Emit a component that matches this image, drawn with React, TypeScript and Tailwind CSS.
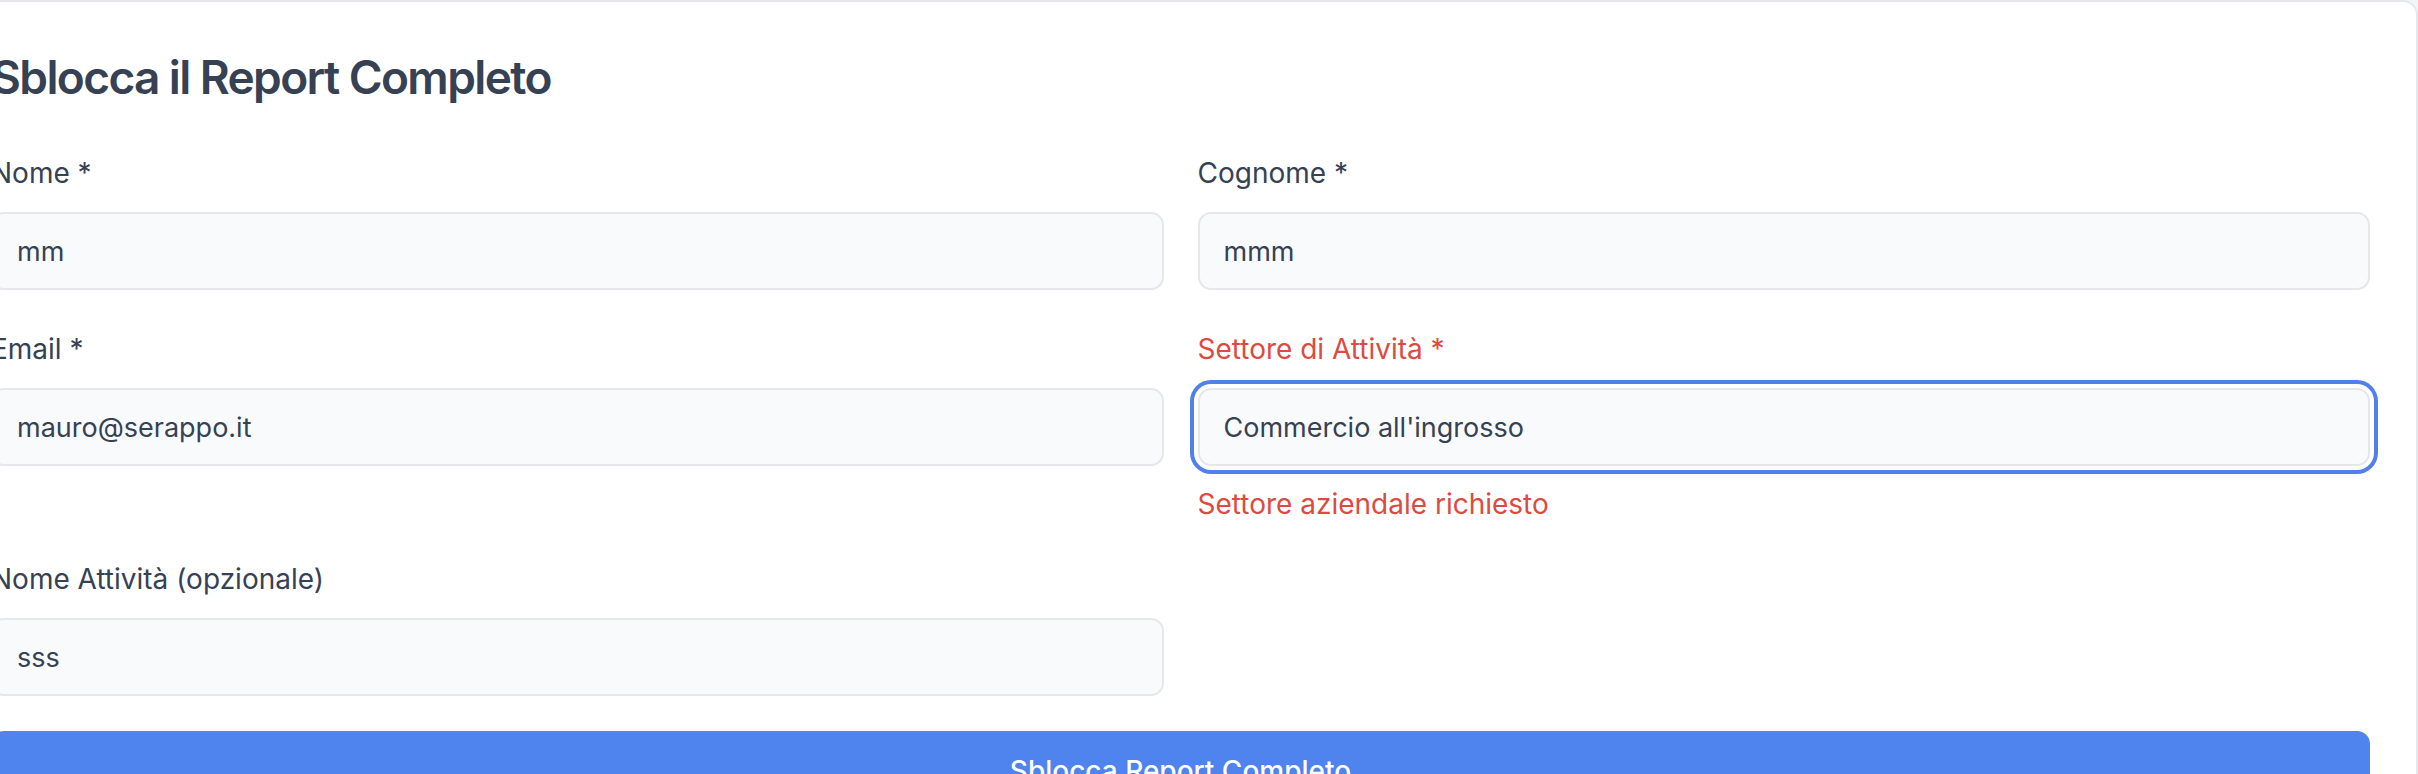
import React from 'react';

type FieldProps = {
  label: string;
  value: string;
  error?: string;
  focused?: boolean;
};

function Field({ label, value, error, focused }: FieldProps) {
  return (
    <div className="flex flex-col">
      <label className={`text-[28px] leading-[32px] font-normal mb-[23px] ${error ? 'text-[#dc4b41]' : 'text-gray-700'}`}>
        {label}
      </label>
      <input
        type="text"
        defaultValue={value}
        readOnly
        className={`h-[78px] w-full rounded-[13px] border-2 border-gray-200 bg-gray-50 px-[24px] text-[27px] leading-[42px] text-gray-700 outline-none ${
          focused ? 'ring-4 ring-[#4f80ec] ring-offset-4 ring-offset-white' : ''
        }`}
      />
      {error && (
        <p className="mt-[22px] text-[28px] leading-[32px] text-[#dc4b41]">{error}</p>
      )}
    </div>
  );
}

export default function App() {
  return (
    <div className="h-screen overflow-hidden bg-gray-100 font-['Inter',sans-serif]">
      <div className="-ml-[57px] rounded-[15px] border-2 border-gray-200 bg-white px-[46px] pt-[45px] pb-12">
        {/* Header */}
        <h2 className="text-[46px] leading-[60px] font-semibold tracking-[-0.035em] text-gray-700 mb-[50px]">
          Sblocca il Report Completo
        </h2>

        {/* Form */}
        <form className="grid grid-cols-2 gap-x-[34px] gap-y-[43px] items-start">
          <Field label="Nome *" value="mm" />
          <Field label="Cognome *" value="mmm" />
          <Field label="Email *" value="mauro@serappo.it" />
          <Field
            label="Settore di Attività *"
            value="Commercio all'ingrosso"
            error="Settore aziendale richiesto"
            focused
          />
          <Field label="Nome Attività (opzionale)" value="sss" />
          <div />
        </form>

        <button
          type="button"
          className="mt-[35px] w-full rounded-[13px] bg-[#4f83ee] pt-[19px] pb-[19px] text-[28px] leading-[42px] font-medium text-white"
        >
          Sblocca Report Completo
        </button>
      </div>
    </div>
  );
}
